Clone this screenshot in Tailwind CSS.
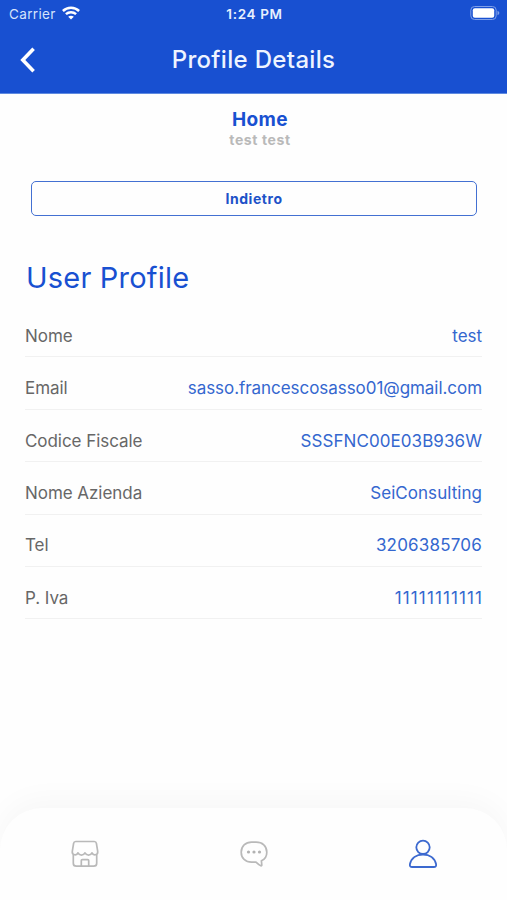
<!DOCTYPE html>
<html lang="it">
<head>
<meta charset="utf-8">
<title>Profile Details</title>
<script src="https://cdn.jsdelivr.net/npm/@tailwindcss/browser@4"></script>
</head>
<body class="bg-[#fefefe] font-['Inter','Liberation_Sans',sans-serif]">
<div class="flex h-[900px] w-[507px] flex-col overflow-hidden">
  <header class="h-[94px] shrink-0 border-b border-[#5f8ae0] bg-[#1850d1] text-white">
    <div class="grid h-7 grid-cols-3 items-center pl-[9px] pr-[7px] text-[13.5px] leading-7">
      <div class="flex items-center gap-[6px] text-[#d5e3fb]"><span class="tracking-[0.35px]">Carrier</span>
        <svg class="h-[14px] w-[18px] -translate-y-px" viewBox="0 0 18 14" fill="none" stroke="#fff" stroke-width="2.5"><path d="M.9 5C5.4.7 12.6.7 17.1 5M3.9 8.1c2.9-2.6 7.3-2.6 10.2 0"/><path d="M9 13.5 6.2 10.7c1.6-1.4 4-1.4 5.6 0z" fill="#fff" stroke="none"/></svg>
      </div>
      <div class="whitespace-nowrap text-center font-semibold tracking-[0.65px] text-[#e8f0fe]">1:24 PM</div>
      <svg class="h-[14px] w-[30px] -translate-y-px justify-self-end" viewBox="0 0 30 14" fill="none"><rect x=".8" y=".5" width="25.4" height="13" rx="3.7" stroke="#7f9fe8"/><rect x="2.8" y="2.2" width="21.4" height="9.6" rx="2" fill="#fff"/><path d="M27.5 4.8c2.4.8 2.4 3.6 0 4.4z" fill="#7f9fe8"/></svg>
    </div>
    <div class="grid h-16 grid-cols-[60px_1fr_60px] items-center">
      <svg class="ml-5 h-[26px] w-4" viewBox="0 0 16 26" fill="none" stroke="#fff" stroke-width="3.6"><path d="M13.6 1.8 2.8 13l10.8 11.2"/></svg>
      <h1 class="text-center text-[24px] font-medium tracking-[0.32px] text-[#eef4ff]">Profile Details</h1>
    </div>
  </header>
  <main class="flex-1">
    <div class="flex flex-col items-center pl-[13px] pt-[14px] font-bold">
      <div class="text-[19px] leading-[24px] tracking-[0.4px] text-[#1850d1]">Home</div>
      <div class="text-[14px] leading-[16px] tracking-[0.6px] text-[#b9b9b9]">test test</div>
    </div>
    <button class="ml-[31px] mt-[33px] flex h-[35px] w-[446px] items-center justify-center rounded-[5px] border-[1.5px] border-[#4370d2] text-[14px] font-bold tracking-[0.55px] text-[#1d52c8]">Indietro</button>
    <h2 class="ml-[26px] mt-[43px] text-[29px] leading-[38px] tracking-[0.2px] text-[#1850d1]">User Profile</h2>
    <dl class="ml-[25px] mt-[8px] w-[457px] text-[17px] tracking-[-0.05px] text-[#3467cf]">
      <div class="flex h-[52.4px] items-end justify-between border-b border-[#f1f1f1] pb-[7px]"><dt class="text-[#676767]">Nome</dt><dd>test</dd></div>
      <div class="flex h-[52.4px] items-end justify-between border-b border-[#f1f1f1] pb-[7px]"><dt class="text-[#676767]">Email</dt><dd>sasso.francescosasso01@gmail.com</dd></div>
      <div class="flex h-[52.4px] items-end justify-between border-b border-[#f1f1f1] pb-[7px]"><dt class="text-[#676767]">Codice Fiscale</dt><dd class="tracking-[0.07px]">SSSFNC00E03B936W</dd></div>
      <div class="flex h-[52.4px] items-end justify-between border-b border-[#f1f1f1] pb-[7px]"><dt class="text-[#676767]">Nome Azienda</dt><dd class="tracking-[0.05px]">SeiConsulting</dd></div>
      <div class="flex h-[52.4px] items-end justify-between border-b border-[#f1f1f1] pb-[7px]"><dt class="text-[#676767]">Tel</dt><dd class="tracking-[0.2px]">3206385706</dd></div>
      <div class="flex h-[52.4px] items-end justify-between border-b border-[#f1f1f1] pb-[7px]"><dt class="text-[#676767]">P. Iva</dt><dd class="-mr-px tracking-[1.1px]">11111111111</dd></div>
    </dl>
  </main>
  <nav class="grid h-[92px] shrink-0 grid-cols-3 rounded-t-[42px] bg-[#fefefe] pt-[31px] shadow-[0_-8px_30px_rgba(0,0,0,0.03)]">
    <a class="flex justify-center"><svg class="h-[30px] w-[30px]" viewBox="0 0 30 30" fill="none" stroke="#b9b9b9" stroke-width="1.7" stroke-linejoin="round" stroke-linecap="round"><path d="M5.7 2.5h18.600q1.800 0 2.100 1.800l1.300 8c.5 4-4.600 4.600-5.700 1.500-1.400 3-5.400 3-7 0-1.600 3-5.600 3-7 0-1.100 3.100-6.200 2.500-5.700-1.500l1.300-8q.3-1.800 2.100-1.800zM3.300 15.800v8.400q0 3 3 3h17.400q3 0 3-3v-8.400M11.300 27v-5.500q0-.9.900-.9h5.600q.9 0 .9.900V27"/></svg></a>
    <a class="flex justify-center"><svg class="h-[30px] w-[30px]" viewBox="0 0 30 30" fill="none" stroke="#b9b9b9" stroke-width="1.700" stroke-linejoin="round"><path d="M17 23.200c1.500 1.500 3.100 2.800 4.800 3.500q1.100.4 1-.8l-.4-4.100c3.500-1.500 5.400-4.900 5.400-8.600 0-6.400-4.500-10-10.700-10h-4.600C6.500 3.200 2.200 7.200 2.200 13.200s4.300 10 10.300 10z"/><g fill="#b2b2b2" stroke="none"><circle cx="9.500" cy="13" r="1.600"/><circle cx="15" cy="13" r="1.600"/><circle cx="20.500" cy="13" r="1.600"/></g></svg></a>
    <a class="flex justify-center"><svg class="h-[30px] w-[30px]" viewBox="0 0 30 30" fill="none" stroke="#3c69cf" stroke-width="1.800" stroke-linejoin="round"><circle cx="15" cy="8.300" r="6.700"/><path d="M4.200 28h21.600q2.700 0 2.300-2.700C26.700 19 21.500 15.500 15 15.500S3.300 19 1.900 25.300Q1.500 28 4.200 28z"/></svg></a>
  </nav>
</div>
</body>
</html>
